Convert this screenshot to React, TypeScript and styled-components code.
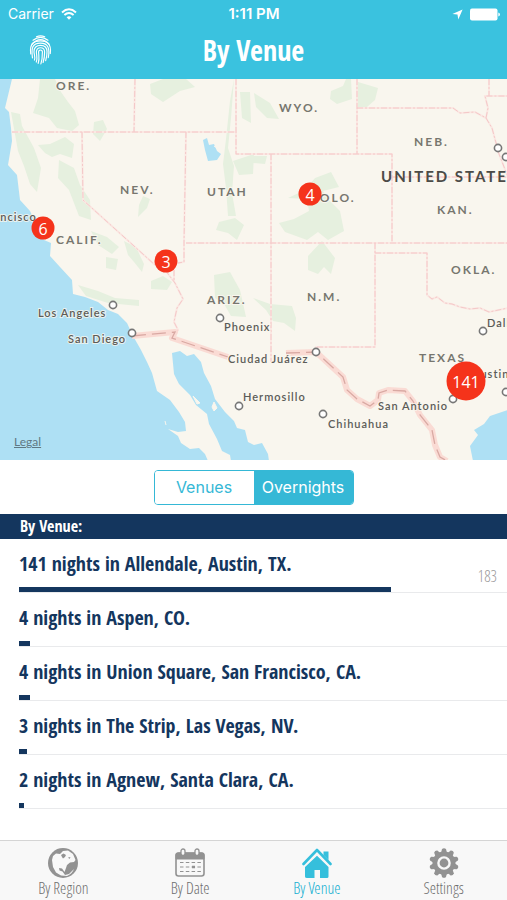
import React, { useState } from "react";
import styled, { createGlobalStyle } from "styled-components";

const condensed = '"Open Sans Condensed", "Roboto Condensed", "Open Sans", sans-serif';
const condensedLight = '"Open Sans Condensed Light", "Roboto Condensed", "Open Sans", sans-serif';

const GlobalStyle = createGlobalStyle`
  *, *::before, *::after { box-sizing: border-box; }
  body { margin: 0; background: #fff; font-family: ${condensed}; }
  button { font: inherit; border: 0; padding: 0; background: none; cursor: pointer; }
`;

const Screen = styled.div`
  display: flex;
  flex-direction: column;
  min-height: 100vh;
`;

const Header = styled.header`
  background: #3ac2df;
  color: #fff;
`;

const StatusBar = styled.div`
  display: grid;
  grid-template-columns: 1fr auto 1fr;
  align-items: center;
  height: 28px;
  padding: 0 7px 0 8px;
  font: 14px/28px Inter, sans-serif;
`;

const StatusSide = styled.div<{ $end?: boolean }>`
  display: flex;
  align-items: center;
  gap: 7px;
  justify-content: ${(p) => (p.$end ? "flex-end" : "flex-start")};
`;

const Clock = styled.time`
  font-size: 15px;
  font-weight: 600;
`;

const NavBar = styled.div`
  display: grid;
  grid-template-columns: 1fr auto 1fr;
  align-items: center;
  height: 51px;
  padding: 0 29px 8px;
`;

const IconButton = styled.button`
  display: flex;
  justify-self: start;
  color: #fff;
`;

const Title = styled.h1`
  margin: 0;
  font-size: 28px;
  line-height: 36px;
  font-weight: 700;
`;

const MapArea = styled.section`
  position: relative;
  width: 100%;
  aspect-ratio: 507 / 381;
  overflow: hidden;
`;

const MapDrawing = styled.svg`
  display: block;
  width: 100%;
  height: 100%;
  font-family: Lato, sans-serif;
`;

const Pin = styled.button<{ $size: number }>`
  && {
    position: absolute;
    transform: translate(-50%, -50%);
    width: ${(p) => p.$size}px;
    height: ${(p) => p.$size}px;
    border-radius: 50%;
    background: #f5331b;
    color: #fff;
    font: 16px/20px "Open Sans", sans-serif;
  }
`;

const Legal = styled.a`
  position: absolute;
  left: 14px;
  bottom: 10px;
  color: #5f7883;
  font: 12px/16px Lato, sans-serif;
`;

const SwitchRow = styled.div`
  display: flex;
  justify-content: center;
  padding: 10px 0 9px;
`;

const Segmented = styled.div`
  display: grid;
  grid-template-columns: 1fr 1fr;
  width: 200px;
  height: 35px;
  border: 1px solid #35b8d6;
  border-radius: 4px;
  overflow: hidden;
`;

const Segment = styled.button<{ $on: boolean }>`
  && {
    padding-bottom: 1px;
    background: ${(p) => (p.$on ? "#35b8d6" : "#fff")};
    color: ${(p) => (p.$on ? "#fff" : "#35b8d6")};
    font: 16px/32px Inter, sans-serif;
  }
`;

const Band = styled.h2`
  margin: 0;
  padding: 0 20px 1px;
  background: #14365e;
  color: #fff;
  font-size: 16px;
  line-height: 24px;
  font-weight: 700;
`;

const List = styled.ul`
  flex: 1;
  margin: 0;
  padding: 0;
  list-style: none;
`;

const Row = styled.li`
  display: flex;
  flex-direction: column;
  justify-content: space-between;
  height: 54px;
  padding: 9px 5px 0 19px;
  background: linear-gradient(#e9eaec, #e9eaec) 19px 100% / 100% 1px no-repeat;
`;

const RowText = styled.div`
  display: flex;
  justify-content: space-between;
  height: 32px;
  color: #14365e;
  font-size: 20px;
  line-height: 32px;
  font-weight: 700;
`;

const Total = styled.span`
  padding: 12px 5px 0 0;
  color: #999;
  font: 300 16px/32px ${condensedLight};
`;

const Bar = styled.div`
  height: 5px;
  margin-bottom: 1px;
  background: #14365e;
`;

const TabBar = styled.nav`
  display: grid;
  grid-template-columns: repeat(4, 1fr);
  height: 60px;
  padding-top: 7px;
  border-top: 1px solid #d5d5d5;
  background: #f8f8f8;
`;

const Tab = styled.button<{ $on: boolean }>`
  && {
    display: flex;
    flex-direction: column;
    align-items: center;
    gap: 1px;
    color: ${(p) => (p.$on ? "#35bfdc" : "#929292")};
    font: 300 16px/18px ${condensedLight};
  }
`;

const TabLabel = styled.span<{ $on: boolean }>`
  color: ${(p) => (p.$on ? "#12aed0" : "#6e6e6e")};
`;

const Wifi = () => (
  <svg width="16" height="12" viewBox="0 0 16 12" fill="none" stroke="#fff" strokeWidth="2" aria-hidden="true">
    <path d="M1 4.4Q8-1.8 15 4.4M3.4 7Q8 3 12.6 7" />
    <path d="M5.6 9.2Q8 7.1 10.4 9.2L8 11.7Z" fill="#fff" stroke="none" />
  </svg>
);

const LocationArrow = () => (
  <svg width="11" height="11" viewBox="0 0 11 11" fill="#fff" aria-hidden="true">
    <path d="M10.6.4 6.3 10.5 5.5 5.6.4 5Z" />
  </svg>
);

const Battery = () => (
  <svg width="30" height="13" viewBox="0 0 30 13" fill="#fff" aria-hidden="true">
    <rect x="0" y=".5" width="27.5" height="12" rx="2" />
    <path d="M28.3 4.5Q30 5 30 6.5T28.3 8.5Z" />
  </svg>
);

const Fingerprint = () => (
  <svg width="23" height="32" viewBox="0 0 24 32" fill="none" stroke="currentColor" strokeWidth="1.2" strokeLinecap="round" aria-hidden="true">
    <path d="M7.8 2.2Q12 .2 16.4 2.2" />
    <path d="M4.2 5.8Q12-.2 19.8 5.8" />
    <path d="M3 10Q12 .2 21 10" />
    <path d="M1.8 20C.2 8.6 6 6.5 12 6.5s11.8 2.4 10.2 13.2" />
    <path d="M3.6 24.2C2.2 14 3.5 8.9 12 8.9s9.8 6 8.1 15.2" />
    <path d="M5.7 26.5C6.8 23 5.2 20.3 5.2 17.7c0-4.2 2.5-6.5 6.8-6.5s6.8 2.5 6.8 6.6c0 4-.7 7-1.4 9.3" />
    <path d="M7.6 28.6c1.6-4 .1-7.4.1-10.6 0-2.7 1.6-4.4 4.3-4.4s4.3 1.8 4.3 4.4c0 4-.5 7.6-1.6 11" />
    <path d="M9.6 30c1.7-4.8.4-8.7.4-11.8 0-1.4.7-2.2 2-2.2s2 .9 2 2.2c0 4.6-.3 8.5-1.6 12.3" />
  </svg>
);

const GlobeIcon = () => (
  <svg width="30" height="30" viewBox="0 0 30 30" aria-hidden="true">
    <circle cx="15" cy="15" r="15" fill="currentColor" />
    <path d="M4 12 5 8 8 5.5 12 6 15 3 20 2.5 25 6 27.5 12 26 14 22 14.5 19 17 18 20 16.5 24 14 20.500 11 20 11.500 22.500 14.500 23.500 17 27 21 26 26 21Q24 26 19 28L13 27.500 8 24.500 5 19Z" fill="#f8f8f8" />
    <path d="M13 7 15.500 5.500 18 7 17 9 15 10.500 14 9ZM20 9.500 22.500 9 21.500 11Z" fill="currentColor" />
  </svg>
);

const CalendarIcon = () => (
  <svg width="30" height="30" viewBox="0 0 30 30" fill="none" stroke="currentColor" aria-hidden="true">
    <rect x="1" y="5" width="28" height="23" rx="2.5" strokeWidth="1.6" />
    <path d="M1 11V7Q1 5 3 5H27Q29 5 29 7V11Z" fill="currentColor" />
    <g fill="#f8f8f8" strokeWidth="1.3">
      <rect x="6" y="1" width="4" height="6.5" rx="2" />
      <rect x="20" y="1" width="4" height="6.5" rx="2" />
    </g>
    <path d="M5 14.5H26M5 19H26M5 23.5H26" strokeWidth="1" strokeDasharray="3.5 2.3" />
    <path d="M17 19h3" strokeWidth="2.5" />
  </svg>
);

const HouseIcon = () => (
  <svg width="30" height="30" viewBox="0 0 30 30" fill="currentColor" aria-hidden="true">
    <path d="M15 7.8 26.5 19V28.5Q26.5 30 25 30H18V22H12.5V30H5Q3 30 3 28.5V19Z" />
    <path d="M1.5 16.5 15 2.5 28.5 16.5" fill="none" stroke="#f8f8f8" strokeWidth="5" />
    <path d="M21.5 3.5H26.5V12L21.5 7Z" />
    <path d="M1.5 16 15 2 28.5 16" fill="none" stroke="currentColor" strokeWidth="2.6" strokeLinecap="round" strokeLinejoin="round" />
  </svg>
);

const GearIcon = () => (
  <svg width="30" height="30" viewBox="0 0 30 30" aria-hidden="true">
    <g fill="currentColor">
      <circle cx="15" cy="15" r="11.5" />
      {Array.from({ length: 10 }, (_, i) => (
        <path key={i} d="M12 5 13 1Q15-.7 17 1L18 5Z" transform={`rotate(${i * 36} 15 15)`} />
      ))}
    </g>
    <circle cx="15" cy="15" r="5.6" fill="none" stroke="#f8f8f8" strokeWidth="2.4" />
  </svg>
);

const water = [
  "M0 79H12L5 108 9 112 11 128 12 141 8 165 17 175 20 200 30 211 38 228 44 240 51 243 50 256 60 267 72 280 73 294 85 297 98 302 108 310 118 314 127 323 133 336 141 350 147 362 152 373 157 391 170 400 179 412 185 422 186 431 178 432 168 429 178 436 181 443 190 449 199 448 205 454 208 461H0Z",
  "M172 353 180 351 187 356 194 354 201 362 204 373 211 386 215 399 225 412 234 421 237 428 245 430 248 442 254 445 262 443 268 454 269 461H231L230 455 222 451 217 439 209 424 207 414 196 405 190 395 179 384 174 374Z",
  "M508 410 490 416 484 424 474 430 478 435 470 446 473 461H508Z",
  "M203 140 207 138 209 145 214 144 217 151 221 154 217 160 208 161 205 150Z",
];

const parks = [
  "M40 79H55L61 92 68 102 75 111 79 125 72 131 57 128 49 118 33 113 38 98Z",
  "M11 112 20 114 22 126 34 148 41 168 37 192 30 184 24 166 18 151Z",
  "M38 145 50 144 65 137 74 144 72 158 60 154 52 157 45 153Z",
  "M94 122 103 120 107 129 100 141 93 134Z",
  "M59 160 74 168 80 185 90 200 91 220 79 216 69 190 58 178Z",
  "M91 231 107 237 119 247 112 254 98 245Z",
  "M124 241 136 247 144 264 142 272 134 262 128 255Z",
  "M143 196 150 199 147 208 138 217 139 205Z",
  "M150 84 163 79H186L195 87 180 91 163 102 151 94Z",
  "M234 79 231 118 228 148 234 166 232 193 236 216 228 216 226 188 223 164 226 139 230 101Z",
  "M240 92 250 92 251 123 242 118Z",
  "M233 161 254 154 253 174 239 175Z",
  "M219 222 235 218 244 225 237 240 228 233 216 230Z",
  "M106 257 118 259 116 270 106 268Z",
  "M78 285 98 291 115 298 139 300 139 306 108 303 86 296Z",
  "M151 281 163 276 172 282 167 290 151 289Z",
  "M214 275 230 272 240 290 246 317 231 316 223 302 215 298Z",
  "M254 93 270 103 279 119 267 118 256 107Z",
  "M331 91 343 86 346 79H351L352 99 337 104 330 99Z",
  "M358 82 378 88 375 100 367 107 358 109Z",
  "M253 156 267 156 265 164 253 163Z",
  "M315 178 331 172 339 187 323 191 327 198 340 211 344 231 328 240 318 232 307 240 285 232 279 223 294 219 309 211 307 199 288 198 305 190Z",
  "M322 241 335 258 331 274 324 267 318 274 308 270 308 256Z",
  "M253 298 270 304 292 306 296 318 295 331 284 323 273 321 266 310Z",
];

const stateLines =
  "M12 132H236M135 79 134 132M236 79V154H392V243M82 132 83 200 155 265M186 132 184 243 184 262 178 263M186 243H508M271 154V362M357 79V154M357 108H453L460 113 475 112 486 118 492 128 499 154 508 177M486 118 488 108 485 96H508M489 79V96M392 177H508M375 243V347H315M375 253H427V295L432 299 437 297 445 303 452 304 460 307 470 309 480 308 489 312 508 308M165 270 175 283 183 299 177 308 174 322 178 330 175 335M174 270V282";
const nationalLine =
  "M132 336 175 332 172 338 228 357M286 353 316 352 343 377 347 390 357 399 370 406 378 400 379 393 388 390 405 391 413 401 420 415 432 430 435 445 440 457 447 461";

const states: [string, number, number][] = [
  ["ORE.", 56, 90],
  ["WYO.", 279, 112],
  ["NEB.", 414, 146],
  ["NEV.", 120, 194],
  ["UTAH", 207, 196],
  ["COLO.", 310, 202],
  ["KAN.", 437, 214],
  ["CALIF.", 56, 244],
  ["OKLA.", 451, 274],
  ["ARIZ.", 207, 304],
  ["N.M.", 307, 301],
  ["TEXAS", 419, 362],
];

const cities: [string, number, number][] = [
  ["Francisco", -18, 221],
  ["Los Angeles", 38, 317],
  ["San Diego", 68, 343],
  ["Phoenix", 224, 331],
  ["Ciudad Juárez", 228, 363],
  ["Hermosillo", 243, 401],
  ["Chihuahua", 328, 428],
  ["San Antonio", 378, 410],
  ["Austin", 472, 378],
  ["Dallas", 487, 327],
  ["Monterrey", 426, 468],
];

const dots = [
  [113, 305], [132, 333], [220, 318], [239, 406], [316, 352], [323, 414],
  [483, 331], [453, 399], [506, 392], [498, 148], [506, 157],
];

const pins = [
  { count: 6, place: "San Francisco", x: 43, y: 149, size: 23 },
  { count: 3, place: "Las Vegas", x: 166, y: 182, size: 23 },
  { count: 4, place: "Aspen", x: 310, y: 115, size: 23 },
  { count: 141, place: "Austin", x: 466, y: 302, size: 39 },
];

const VenueMap = () => (
  <MapArea aria-label="Map of nights by venue">
    <MapDrawing viewBox="0 79 507 381" role="img" aria-label="Western United States">
      <rect y="79" width="507" height="381" fill="#f9f6ee" />
      <g fill="#e6f0df">{parks.map((d) => <path key={d} d={d} />)}</g>
      <g fill="#aee0f4">{water.map((d) => <path key={d} d={d} />)}</g>
      <path d="M214 146 217 148 219 146M193 396 200 403 197 404ZM214 402 217 408 214 411 212 407ZM165 421 166 425" fill="#f9f6ee" stroke="#f9f6ee" />
      <path d={stateLines} fill="none" stroke="#fbe8e3" strokeWidth="2" />
      <path d={stateLines} fill="none" stroke="#f4c8c8" strokeWidth="1" strokeDasharray="6 2 2 2" />
      <path d={nationalLine} fill="none" stroke="#fadbd4" strokeWidth="6" strokeLinejoin="round" />
      <path d={nationalLine} fill="none" stroke="#d9a9a3" strokeWidth="1.3" strokeDasharray="14 6" />
      <g fill="#fff" stroke="#777" strokeWidth="1.6">
        {dots.map(([x, y]) => <circle key={`${x}-${y}`} cx={x} cy={y} r="3.6" />)}
      </g>
      <g fill="#77766f" stroke="#f9f6ee" strokeWidth="2" paintOrder="stroke" fontSize="12" fontWeight="700" letterSpacing="2">
        {states.map(([name, x, y]) => <text key={name} x={x} y={y}>{name}</text>)}
      </g>
      <g fill="#5c5c58" stroke="#f9f6ee" strokeWidth="2" strokeOpacity=".8" paintOrder="stroke" fontSize="11" fontWeight="600" letterSpacing="1">
        {cities.map(([name, x, y]) => <text key={name} x={x} y={y}>{name}</text>)}
      </g>
      <text x="381" y="182" fill="#4c4b47" fontSize="15" fontWeight="700" letterSpacing="2">UNITED STATES</text>
    </MapDrawing>
    {pins.map((p) => (
      <Pin
        key={p.place}
        $size={p.size}
        aria-label={`${p.count} nights, ${p.place}`}
        style={{ left: `${(p.x / 507) * 100}%`, top: `${(p.y / 381) * 100}%` }}
      >
        {p.count}
      </Pin>
    ))}
    <Legal href="#legal">Legal</Legal>
  </MapArea>
);

const yearGoal = 183;
const venues = [
  { nights: 141, place: "Allendale, Austin, TX." },
  { nights: 4, place: "Aspen, CO." },
  { nights: 4, place: "Union Square, San Francisco, CA." },
  { nights: 3, place: "The Strip, Las Vegas, NV." },
  { nights: 2, place: "Agnew, Santa Clara, CA." },
];

const tabs = [
  { label: "By Region", Icon: GlobeIcon },
  { label: "By Date", Icon: CalendarIcon },
  { label: "By Venue", Icon: HouseIcon },
  { label: "Settings", Icon: GearIcon },
];

export default function App() {
  const [mode, setMode] = useState("Overnights");
  const [tab, setTab] = useState("By Venue");
  return (
    <Screen>
      <GlobalStyle />
      <Header>
        <StatusBar>
          <StatusSide>
            Carrier
            <Wifi />
          </StatusSide>
          <Clock>1:11 PM</Clock>
          <StatusSide $end>
            <LocationArrow />
            <Battery />
          </StatusSide>
        </StatusBar>
        <NavBar>
          <IconButton aria-label="Check in">
            <Fingerprint />
          </IconButton>
          <Title>By Venue</Title>
        </NavBar>
      </Header>
      <VenueMap />
      <SwitchRow>
        <Segmented role="group" aria-label="Count by">
          {["Venues", "Overnights"].map((m) => (
            <Segment key={m} $on={mode === m} aria-pressed={mode === m} onClick={() => setMode(m)}>
              {m}
            </Segment>
          ))}
        </Segmented>
      </SwitchRow>
      <Band>By Venue:</Band>
      <List>
        {venues.map((v, i) => (
          <Row key={v.place}>
            <RowText>
              <span>{v.nights} nights in {v.place}</span>
              {i === 0 && <Total>{yearGoal}</Total>}
            </RowText>
            <Bar style={{ width: `${(v.nights / yearGoal) * 100}%` }} />
          </Row>
        ))}
      </List>
      <TabBar>
        {tabs.map(({ label, Icon }) => (
          <Tab key={label} $on={tab === label} onClick={() => setTab(label)}>
            <Icon />
            <TabLabel $on={tab === label}>{label}</TabLabel>
          </Tab>
        ))}
      </TabBar>
    </Screen>
  );
}
